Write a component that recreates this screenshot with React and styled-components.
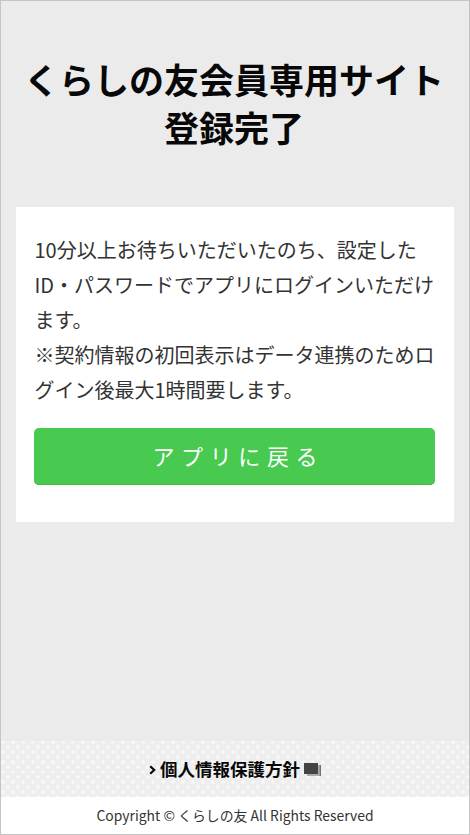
import React from "react";
import styled, { createGlobalStyle } from "styled-components";

const Global = createGlobalStyle`
  * { box-sizing: border-box; }
  body { margin: 0; background: #ebebeb; font-family: "Noto Sans CJK JP", sans-serif; }
`;

const Page = styled.div`
  display: flex;
  flex-direction: column;
  width: 470px;
  height: 835px;
  overflow: hidden;
  background: #ebebeb;
  border: 1px solid #c5c5c5;
`;

const Title = styled.h1`
  margin: 54px 0 0;
  padding-right: 2px;
  height: 96px;
  font-size: 35px;
  line-height: 48px;
  font-weight: 700;
  text-align: center;
  color: #080808;
  white-space: nowrap;
`;

const Line = styled.span`
  display: block;
`;

const Card = styled.main`
  width: 438.5px;
  margin: 56px 0 0 14.5px;
  height: 315px;
  padding: 25px 19px 0;
  background: #fff;
`;

const Message = styled.p`
  margin: 0;
  font-size: 20px;
  line-height: 35px;
  color: #333;
  white-space: nowrap;
`;

const BackButton = styled.button`
  display: block;
  width: 401px;
  height: 56.5px;
  margin: 21px 0 0 -0.2px;
  padding: 0 0 2px 7px;
  border: 0;
  border-radius: 5px;
  background: #47ca4f;
  box-shadow: inset 0 -1px 0 #43b94a;
  color: #fff;
  font: 400 22px/54px "Noto Sans CJK JP", sans-serif;
  letter-spacing: 6.6px;
`;

const PolicyBar = styled.nav`
  display: flex;
  justify-content: center;
  align-items: center;
  height: 56px;
  margin-top: auto;
  background-color: #eeeeee;
  background-image:
    radial-gradient(circle, #f8f8f8 1px, transparent 2.4px),
    radial-gradient(circle, #f8f8f8 1px, transparent 2.4px);
  background-size: 10px 10px;
  background-position: 2px 1px, 7px 6px;
`;

const PolicyLink = styled.a`
  display: flex;
  align-items: center;
  color: #080808;
  font-size: 17.5px;
  line-height: 26px;
  font-weight: 700;
`;

const Chevron = styled.svg`
  width: 7px;
  height: 10px;
  margin: 1px 4px 0 0;
`;

const WindowIcon = styled.svg`
  width: 17px;
  height: 15px;
  margin: 1px 0 0 4px;
`;

const Footer = styled.footer`
  height: 37px;
  background: #fff;
  color: #333;
  text-align: center;
  font-size: 13.9px;
  line-height: 36px;
`;

export default function App() {
  return (
    <>
      <Global />
      <Page>
        <Title>
          <Line>くらしの友会員専用サイト</Line>
          <Line>登録完了</Line>
        </Title>
        <Card>
          <Message>
            <Line>10分以上お待ちいただいたのち、設定した</Line>
            <Line>ID・パスワードでアプリにログインいただけ</Line>
            <Line>ます。</Line>
            <Line>※契約情報の初回表示はデータ連携のためロ</Line>
            <Line>グイン後最大1時間要します。</Line>
          </Message>
          <BackButton type="button">アプリに戻る</BackButton>
        </Card>
        <PolicyBar>
          <PolicyLink>
            <Chevron viewBox="0 0 7 10" aria-hidden="true">
              <path d="M1.2 1.2 5.2 5 1.2 8.8" fill="none" stroke="#080808" strokeWidth="2.2" />
            </Chevron>
            個人情報保護方針
            <WindowIcon viewBox="0 0 17 15" aria-hidden="true">
              <path d="M3 13H15V3" fill="none" stroke="#aaa" strokeWidth="2" />
              <path d="M16.3 3V14" fill="none" stroke="#555" strokeWidth="1" />
              <path d="M0 1H14V12H0Z" fill="#444" />
            </WindowIcon>
          </PolicyLink>
        </PolicyBar>
        <Footer>Copyright © くらしの友 All Rights Reserved</Footer>
      </Page>
    </>
  );
}
